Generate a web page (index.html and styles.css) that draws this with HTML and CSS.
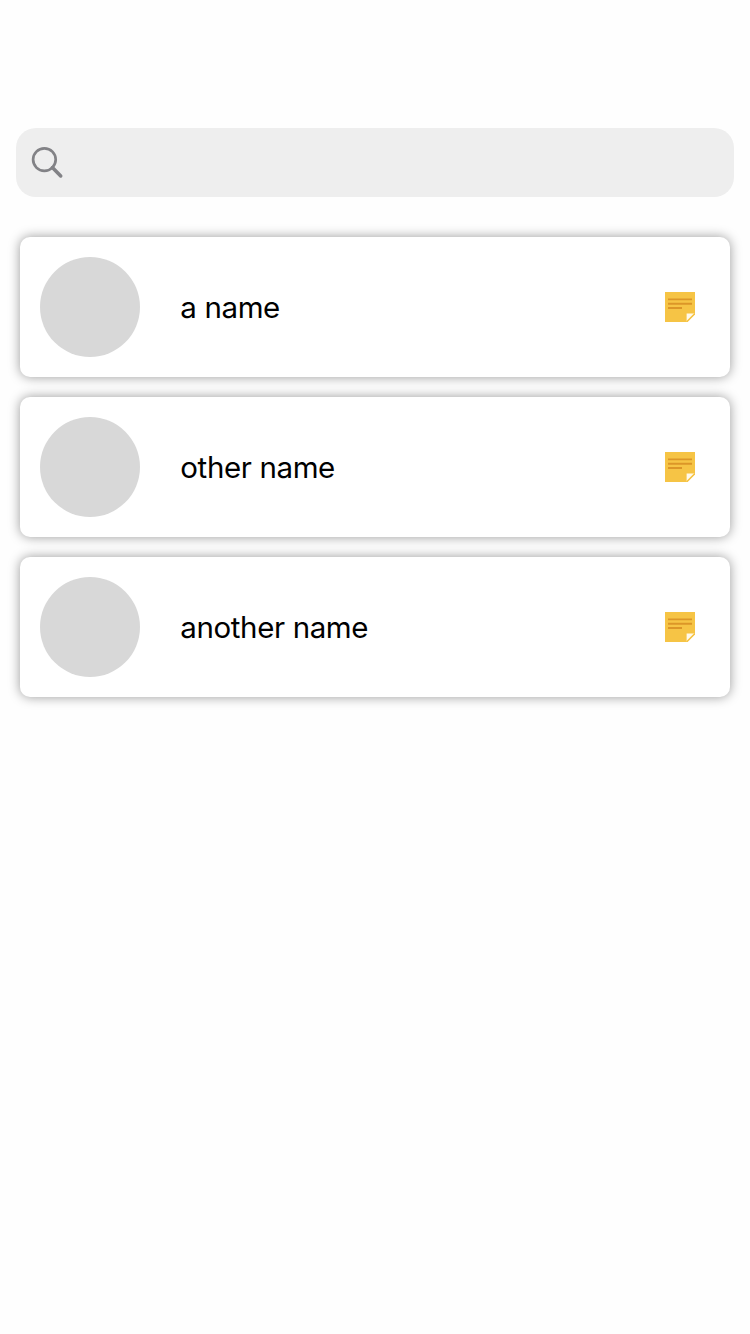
FILE: index.html
```html
<!DOCTYPE html>
<html lang="en">
<head>
<meta charset="utf-8">
<title>Contacts</title>
<link rel="stylesheet" href="styles.css">
</head>
<body>
<main class="screen">
  <div class="search" role="search">
    <svg class="search-icon" viewBox="0 0 34 34" fill="none" stroke="#828286">
      <circle cx="14.4" cy="14.6" r="11.3" stroke-width="2.7"/>
      <path d="M22.4 22.6L30.7 30.9" stroke-width="3.6" stroke-linecap="round"/>
    </svg>
  </div>
  <ul class="list">
    <li class="card">
      <span class="avatar"></span>
      <span class="name">a name</span>
      <svg class="note" viewBox="0 0 30 30"><path d="M0 0H30V22.3L22.3 30H0Z" fill="#f6c445"/><path d="M21.6 21.6H29.6L21.6 29.6Z" fill="#fffaec"/><path d="M29.7 21.8L21.8 29.7" stroke="#f6c445" stroke-width="1.5"/><path d="M3 7.4H27M3 11.8H27M3 16H17" stroke="#dc9628" stroke-width="1.9"/></svg>
    </li>
    <li class="card">
      <span class="avatar"></span>
      <span class="name">other name</span>
      <svg class="note" viewBox="0 0 30 30"><path d="M0 0H30V22.3L22.3 30H0Z" fill="#f6c445"/><path d="M21.6 21.6H29.6L21.6 29.6Z" fill="#fffaec"/><path d="M29.7 21.8L21.8 29.7" stroke="#f6c445" stroke-width="1.5"/><path d="M3 7.4H27M3 11.8H27M3 16H17" stroke="#dc9628" stroke-width="1.9"/></svg>
    </li>
    <li class="card">
      <span class="avatar"></span>
      <span class="name">another name</span>
      <svg class="note" viewBox="0 0 30 30"><path d="M0 0H30V22.3L22.3 30H0Z" fill="#f6c445"/><path d="M21.6 21.6H29.6L21.6 29.6Z" fill="#fffaec"/><path d="M29.7 21.8L21.8 29.7" stroke="#f6c445" stroke-width="1.5"/><path d="M3 7.4H27M3 11.8H27M3 16H17" stroke="#dc9628" stroke-width="1.9"/></svg>
    </li>
  </ul>
</main>
</body>
</html>
```
FILE: styles.css
```css
body {
  margin: 0;
  background: #fefefe;
  color: #000;
  font-family: Inter, "Liberation Sans", sans-serif;
}
.screen {
  box-sizing: border-box;
  min-height: 1334px;
  padding: 128px 16px 0;
}
.search {
  display: flex;
  align-items: center;
  box-sizing: border-box;
  height: 69px;
  padding: 0 14px 2px;
  border-radius: 20px;
  background: #eee;
}
.search-icon {
  width: 34px;
  height: 34px;
}
.list {
  display: flex;
  flex-direction: column;
  gap: 20px;
  margin: 40px 4px 0;
  padding: 0;
  list-style: none;
}
.card {
  display: flex;
  align-items: center;
  box-sizing: border-box;
  height: 140px;
  padding: 20px 35px 20px 20px;
  border-radius: 10px;
  background: #fff;
  box-shadow: 0 0 12px rgba(0, 0, 0, 0.4);
}
.avatar {
  width: 100px;
  height: 100px;
  border-radius: 50%;
  background: #d8d8d8;
}
.name {
  flex: 1;
  padding: 0 0 0 40.3px;
  font-size: 29.5px;
  line-height: 36px;
  letter-spacing: -0.38px;
}
.note {
  width: 30px;
  height: 30px;
}
```
